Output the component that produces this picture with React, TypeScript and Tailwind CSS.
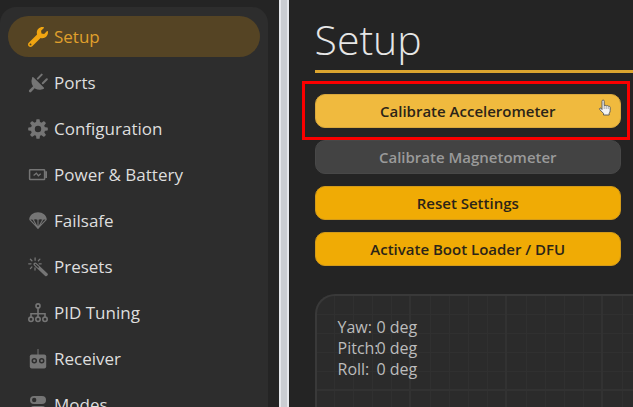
import React from 'react';
import { FaWrench } from 'react-icons/fa';

interface NavItem {
  label: string;
  icon: React.ReactNode;
  active?: boolean;
}

const PlugIcon = () => (
  <svg viewBox="0 0 20 20" className="size-5" fill="none" stroke="currentColor" strokeLinecap="round">
    <path d="m9.800 5.600 3.900-4M14.800 10.200l4-4" strokeWidth="2" />
    <path d="M4.200 4.200q.6-.6 1.200 0L15.800 14.600q.6.7 0 1.200-1 .8-2.400.8-3.400.7-6-.9-2.600-1.600-3.600-5-.7-3.200.4-6.500z" fill="currentColor" stroke="none" />
    <path d="m6 14.200-3.800 3.800" strokeWidth="2.6" />
  </svg>
);

const GearIcon = () => (
  <svg viewBox="0 0 20 20" className="size-5">
    <circle cx="10" cy="10" r="5.2" fill="none" stroke="currentColor" strokeWidth="4" />
    {[0, 45, 90, 135, 180, 225, 270, 315].map((angle) => (
      <path key={angle} d="M7.9 4 8.4 .6Q8.5 .2 8.9 .2H11.1Q11.5 .2 11.6 .6L12.1 4Z" fill="currentColor" transform={`rotate(${angle} 10 10)`} />
    ))}
  </svg>
);

const BatteryIcon = () => (
  <svg viewBox="0 0 20 20" className="size-5" fill="none" stroke="currentColor">
    <rect x="1.6" y="4.7" width="15" height="9.8" rx=".6" strokeWidth="1.5" />
    <path d="M17.2 6.3H19v6.6h-1.8z" fill="currentColor" stroke="none" />
    <path d="M5.6 10.6 8.4 8.2l2 2.6 2.3-2" strokeWidth="1.3" />
  </svg>
);

const ParachuteIcon = () => (
  <svg viewBox="0 0 20 20" className="size-5" fill="none" stroke="currentColor">
    <path d="M1.2 8.2C1.6 4.2 5.2 1.3 10 1.3s8.4 2.9 8.8 6.9l-.5.9q-1.7-1.3-3.5 0-2.3-1.6-4.8 0-2.5-1.6-4.8 0-1.8-1.3-3.5 0z" fill="currentColor" stroke="none" />
    <path d="M1.8 8.6 10 17.2l8.2-8.6M5.2 8.6 9.3 16M14.8 8.6 10.7 16M10 8.6V16" strokeWidth="1.1" />
    <path d="M7.8 15h4.4L10 18z" fill="currentColor" stroke="none" />
  </svg>
);

const WandIcon = () => (
  <svg viewBox="0 0 20 20" className="size-5" fill="none" stroke="currentColor" strokeLinecap="round">
    <path d="m7.2 7.2 10.9 10.2" strokeWidth="3.4" />
    <path d="m7.4 7.4 3 2.8" stroke="#2d2d2d" strokeWidth="1.2" />
    <path d="M7.1.9v2.4M2.4 2.2l1.5 1.6M.7 6.8H3M3.9 9.9l-1.5 1.7M7 11v2.1M10.4 3.7l1.5-1.6M11.2 6.8h2" strokeWidth="1.3" />
  </svg>
);

const TreeIcon = () => (
  <svg viewBox="0 0 20 20" className="size-5" fill="none" stroke="currentColor" strokeWidth="1.6">
    <circle cx="10" cy="2.9" r="2" />
    <circle cx="3" cy="16.3" r="2.2" />
    <circle cx="10" cy="16.3" r="2.2" />
    <circle cx="17" cy="16.3" r="2.2" />
    <path d="M10 5v9M3 14v-3.2h14V14" />
  </svg>
);

const ReceiverIcon = () => (
  <svg viewBox="0 0 20 20" className="size-5">
    <path d="M9.5 0h1v6h-1z" fill="currentColor" />
    <rect x="1.8" y="5.4" width="16.4" height="14.2" rx="2" fill="currentColor" />
    <g fill="none" stroke="#2d2d2d" strokeWidth="1.5">
      <circle cx="6.3" cy="11.8" r="2" />
      <circle cx="13.7" cy="11.8" r="2" />
    </g>
  </svg>
);

const TogglesIcon = () => (
  <svg viewBox="0 0 20 20" className="size-5">
    <rect x="2" y="1" width="16" height="8" rx="4" fill="currentColor" />
    <circle cx="6.2" cy="5" r="2.2" fill="#2d2d2d" />
    <rect x="2" y="11" width="16" height="8" rx="4" fill="currentColor" />
    <circle cx="13.8" cy="15" r="2.2" fill="#2d2d2d" />
  </svg>
);

const HandCursor = () => (
  <svg viewBox="0 0 14 18" className="h-[18px] w-[14px]">
    <path
      d="M4 10.5V2.4Q4 1 5.1 1t1.1 1.4v4.2q1-.8 2 .2 1.1-.7 2 .4 1.8-.4 2 1.2v3.2q0 1.7-1 2.7V16H5.5v-1.6L2 10.9Q1 9.5 2 9t2 1.5z"
      fill="#f4f4f4"
      stroke="#555"
      strokeWidth=".9"
      strokeLinejoin="round"
    />
    <path d="M6.2 7v3M8.2 7.2V10M10.2 7.6V10" stroke="#888" strokeWidth=".7" />
  </svg>
);

const navItems: NavItem[] = [
  { label: 'Setup', icon: <FaWrench size={20} />, active: true },
  { label: 'Ports', icon: <PlugIcon /> },
  { label: 'Configuration', icon: <GearIcon /> },
  { label: 'Power & Battery', icon: <BatteryIcon /> },
  { label: 'Failsafe', icon: <ParachuteIcon /> },
  { label: 'Presets', icon: <WandIcon /> },
  { label: 'PID Tuning', icon: <TreeIcon /> },
  { label: 'Receiver', icon: <ReceiverIcon /> },
  { label: 'Modes', icon: <TogglesIcon /> },
];

const attitude = [
  { axis: 'Yaw:', value: '0 deg' },
  { axis: 'Pitch:', value: '0 deg' },
  { axis: 'Roll:', value: '0 deg' },
];

const buttonBase = 'relative flex h-[34px] w-full items-center justify-center rounded-[10px] border text-[15px] font-semibold';

function ModelGrid() {
  return (
    <svg className="absolute inset-0 size-full" aria-hidden="true">
      <defs>
        <pattern id="grid" x="-2" y="-1" width="96" height="96" patternUnits="userSpaceOnUse">
          <path d="M19.5 0v96M38.5 0v96M57.5 0v96M76.5 0v96M0 19.5h96M0 38.5h96M0 57.5h96M0 76.5h96" stroke="#303030" />
          <path d="M95 0v96M0 95h96" stroke="#323232" strokeWidth="2" />
        </pattern>
      </defs>
      <rect width="100%" height="100%" fill="url(#grid)" />
    </svg>
  );
}

export default function App() {
  return (
    <div className="flex h-screen overflow-hidden bg-[#242424] font-['Open_Sans','Noto_Sans',sans-serif]">
      {/* Sidebar */}
      <div className="w-[44%] shrink-0 pt-[7px] pr-[11px]">
        <nav className="h-full overflow-hidden rounded-tl-2xl rounded-tr-2xl bg-[#2d2d2d] px-2 pt-[9px]">
          <ul className="flex flex-col gap-[5px]">
            {navItems.map((item) => (
              <li key={item.label}>
                <a
                  href="#"
                  className={`flex h-[41px] items-center gap-1.5 rounded-full pl-5 text-[17px] ${
                    item.active ? 'bg-[#554424] text-[#e0a02c]' : 'text-[#dedede]'
                  }`}
                >
                  <span className={`shrink-0 ${item.active ? 'text-[#f0a511]' : 'text-[#757575]'}`}>{item.icon}</span>
                  {item.label}
                </a>
              </li>
            ))}
          </ul>
        </nav>
      </div>

      {/* Divider */}
      <div className="w-2.5 shrink-0 border-x-2 border-[#e6e8ec] bg-[#cacdd2]" />

      {/* Setup tab */}
      <main className="flex min-w-0 flex-1 flex-col pl-[26px]">
        <h1 className="border-b-3 border-[#dba52f] pt-2.5 pb-0.5 text-[41px] leading-[58px] font-light text-[#e6e6e6]">Setup</h1>

        <div className="flex flex-col gap-3 pt-[21px] pr-3">
          <button type="button" className={`${buttonBase} border-[#d9a83c] bg-[#f0ba3e] text-[#2b2418]`}>
            Calibrate Accelerometer
            {/* Highlight frame */}
            <span className="pointer-events-none absolute -top-[14px] -right-[10px] -bottom-[13px] -left-[14px] border-3 border-[#fb0000]" />
            <span className="absolute top-1 right-2">
              <HandCursor />
            </span>
          </button>
          <button type="button" disabled className={`${buttonBase} border-[#484848] bg-[#434343] text-[#9a9a9a]`}>
            Calibrate Magnetometer
          </button>
          <button type="button" className={`${buttonBase} border-[#d29a1a] bg-[#f0ab05] text-[#2b2418]`}>
            Reset Settings
          </button>
          <button type="button" className={`${buttonBase} border-[#d29a1a] bg-[#f0ab05] text-[#2b2418]`}>
            Activate Boot Loader / DFU
          </button>
        </div>

        {/* Model preview */}
        <section className="relative mt-7 flex-1 overflow-hidden rounded-tl-[20px] border-t-2 border-l-2 border-[#393939] bg-[#2b2b2b]">
          <ModelGrid />
          <dl className="relative pt-[21px] pl-[21px] text-base leading-[21px] text-[#bcbcbc]">
            {attitude.map((row) => (
              <div key={row.axis} className="flex">
                <dt className="w-[39px]">{row.axis}</dt>
                <dd>{row.value}</dd>
              </div>
            ))}
          </dl>
        </section>
      </main>
    </div>
  );
}
